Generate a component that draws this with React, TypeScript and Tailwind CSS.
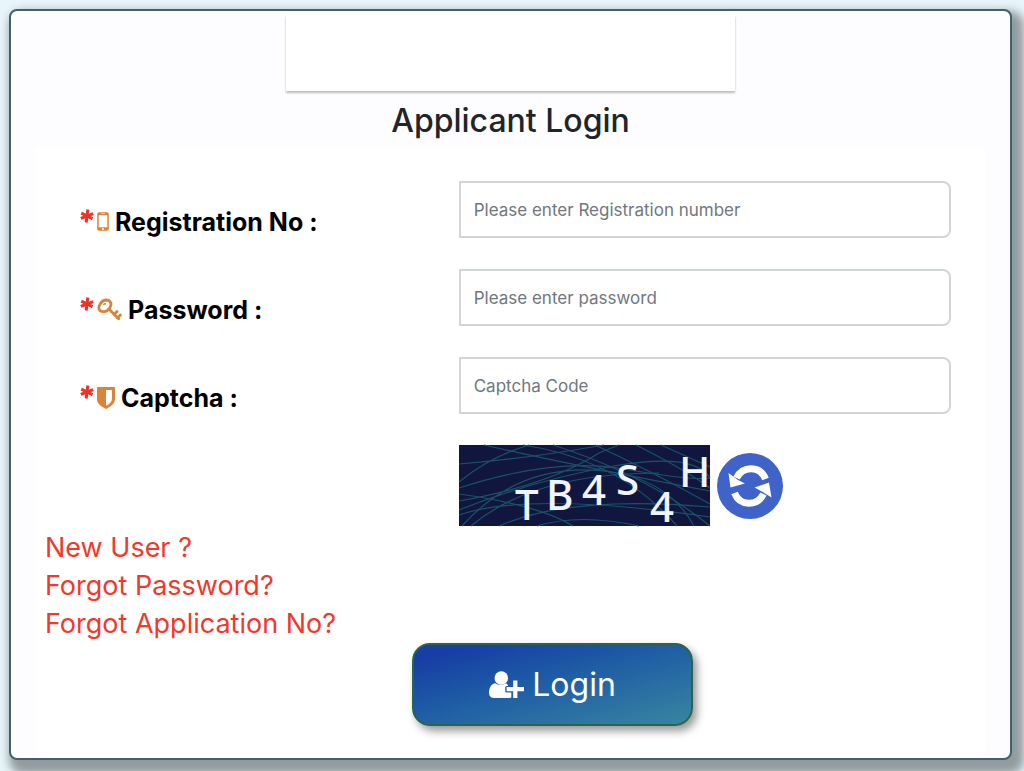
import { type ReactNode } from 'react'

interface FieldProps {
  id: string
  label: string
  type?: string
  placeholder: string
  icon: ReactNode
}

function Asterisk() {
  return (
    <svg viewBox="0 0 14 14" className="mb-3 h-[14px] w-[14px] text-[#ee3124]" aria-hidden="true">
      <path
        d="M7.8.5 6.200 13.500M1.200 4.200l11.400 5.400M13.200 4.600.8 9.400"
        stroke="currentColor"
        strokeWidth="3"
        fill="none"
      />
    </svg>
  )
}

function PhoneIcon() {
  return (
    <svg viewBox="0 0 12 19" className="h-[19px] w-3" aria-hidden="true">
      <path
        fill="currentColor"
        fillRule="evenodd"
        d="M2 .2h8A1.8 1.8 0 0 1 11.8 2v15a1.8 1.8 0 0 1-1.8 1.8H2A1.8 1.8 0 0 1 .2 17V2A1.8 1.8 0 0 1 2 .2Zm-.3 3v12h8.6v-12Zm2.5-1.800v.6h3.600v-.6ZM6 16a1 1 0 1 0 0 2 1 1 0 0 0 0-2Z"
      />
    </svg>
  )
}

function KeyIcon() {
  return (
    <svg viewBox="0 0 25 24" className="h-6 w-[25px]" aria-hidden="true">
      <g fill="none" stroke="currentColor" strokeWidth="2.800" strokeLinejoin="round">
        <path d="M2.800 6.700C4.200 3.900 6.900 2 9.600 2c2.900.1 4.600 2.200 4.300 4.800-.4 3.400-3.500 6.700-7 6.900-3 .2-5.300-1.600-5.100-4.200.1-1 .4-1.900 1-2.800Z" />
        <path d="M11.800 11l9.900 9.800M17 16.600l3-3M20.400 20l3-3" strokeLinecap="round" />
        <path d="M6.400 6.700c.8-.9 1.700-1.200 2.600-1" strokeWidth="1.500" />
      </g>
    </svg>
  )
}

function ShieldIcon() {
  return (
    <svg viewBox="0 0 18 22" className="h-[22px] w-[18px]" aria-hidden="true">
      <path
        fill="currentColor"
        fillRule="evenodd"
        d="M1 0h16q1 0 1 1v11c0 4.500-4 7.700-9 10-5-2.300-9-5.500-9-10V1Q0 0 1 0Zm8 3v15.800c3.600-1.900 6-4.100 6-6.900V3Z"
      />
    </svg>
  )
}

function UserPlusIcon() {
  return (
    <svg viewBox="0 0 35 27" className="h-[27px] w-[35px]" aria-hidden="true">
      <g fill="currentColor">
        <circle cx="12.300" cy="7" r="6.800" />
        <path d="M6.500 12.300c-4.500.4-6.500 5-6.500 9.800C0 25 1.700 27 4.600 27h15.800q1 0 1.900-.4v-5.100h-4.600q-1.500 0-1.500-1.500v-3.400q0-1.500 1.500-1.500h1.500c-.5-1.600-1.400-2.600-2.600-2.800-2.700 2-7.300 2.100-10.100 0Z" />
        <path d="M24.200 9.500h4.200v6.600H35v4.100h-6.600v6.700h-4.200v-6.700h-6.600v-4.100h6.600Z" />
      </g>
    </svg>
  )
}

function RefreshIcon() {
  return (
    <svg viewBox="0 0 66 66" className="h-[66px] w-[66px]" aria-hidden="true">
      <circle cx="33" cy="33" r="33" fill="#4063c9" />
      <path
        d="M19.500 25C26 12.500 43 12.500 48.500 26M46.500 41C40 53.500 23 53.500 17.500 40"
        fill="none"
        stroke="#fff"
        strokeWidth="7"
      />
      <path fill="#fff" d="m11.500 20 2 14.500L28 30.500l-7-3.500ZM54.500 44.500l-2.500-15-14.500 5 6.500 3.500Z" />
    </svg>
  )
}

const letters = [
  { char: 'T', x: 56, y: 75 },
  { char: 'B', x: 87, y: 65 },
  { char: '4', x: 123, y: 60 },
  { char: 'S', x: 157, y: 50 },
  { char: '4', x: 191, y: 77 },
  { char: 'H', x: 220, y: 42 },
]

function CaptchaImage() {
  return (
    <svg viewBox="0 0 251 81" className="h-[81px] w-[251px] overflow-visible" role="img" aria-label="Captcha">
      <rect width="251" height="81" fill="#11163f" />
      <g fill="none" stroke="#1a526a" strokeWidth="1.200">
        <path d="M0 37Q30 12 70 0M0 19Q65 14 145 0M0 43Q95 12 165 24T251 33" />
        <path d="M0 56Q90 40 140 8L160 0M0 65Q75 35 155 21T251 33M3 81Q55 23 130 25T235 81" />
        <path d="M12 81Q75 28 200 28M0 70Q70 46 251 72M40 81Q110 50 251 62M78 81Q120 68 180 81" />
        <path d="M64 0Q160 14 218 81M94 0Q188 30 251 81M136 0Q192 26 251 59M177 0Q225 24 251 43" />
        <path d="M0 49Q80 60 114 81M25 0Q122 22 251 46M202 0 251 22" />
      </g>
      {letters.map((l, i) => (
        <text key={i} x={l.x} y={l.y} fill="#f0f4ff" fontSize="42" fontWeight="500" fontFamily="'Noto Sans', sans-serif">
          {l.char}
        </text>
      ))}
    </svg>
  )
}

function Field({ id, label, type = 'text', placeholder, icon }: FieldProps) {
  return (
    <div className="grid grid-cols-[10fr_13fr] items-center">
      <label htmlFor={id} className="flex items-center pt-6 text-[25px] leading-8 font-bold text-black">
        <Asterisk />
        <span className="mr-[6px] ml-[3px] text-[#d8843b]">{icon}</span>
        {label}
      </label>
      <input
        id={id}
        type={type}
        placeholder={placeholder}
        className="h-[57px] w-full min-w-0 rounded-lg rounded-l-none border-2 border-[#d0d5da] bg-white px-[13px] text-[17px] text-gray-700 placeholder:text-[#70777e]"
      />
    </div>
  )
}

export default function App() {
  return (
    <div className="min-h-screen bg-[#e8f6fb] pt-[9px] pr-3 pb-3 pl-[9px] font-['Inter',sans-serif]">
      <main className="rounded-lg border-2 border-[#41616f] bg-[#fdfdff] px-[25px] pt-1 shadow-[6px_8px_10px_6px_#929b9d]">
        <div className="mx-auto h-[76px] w-[449px] max-w-full bg-white shadow-[0_2px_2px_#bbb]" />
        <h1 className="pt-[10px] pb-[6px] text-center text-[32px] leading-10 font-medium text-[#212529]">Applicant Login</h1>

        <form className="bg-white px-[9px] pt-[34px] pb-8" onSubmit={(e) => e.preventDefault()}>
          <div className="flex flex-col gap-[31px] pr-[25px] pl-[35px]">
            <Field id="registration" label="Registration No :" placeholder="Please enter Registration number" icon={<PhoneIcon />} />
            <Field id="password" label="Password :" type="password" placeholder="Please enter password" icon={<KeyIcon />} />
            <Field id="captcha" label="Captcha :" placeholder="Captcha Code" icon={<ShieldIcon />} />
            <div className="grid grid-cols-[10fr_13fr]">
              <div className="col-start-2 flex items-center gap-[7px]">
                <CaptchaImage />
                <button type="button" aria-label="Refresh captcha" className="rounded-full">
                  <RefreshIcon />
                </button>
              </div>
            </div>
          </div>

          <nav className="flex flex-col items-start pt-[3px] text-[27px] leading-[38px] text-[#f0392b]">
            <a href="#new-user">New User ?</a>
            <a href="#forgot-password">Forgot Password?</a>
            <a href="#forgot-application">Forgot Application No?</a>
          </nav>

          <div className="flex justify-center pl-[84px]">
            <button
              type="submit"
              className="flex h-[83px] w-[281px] items-center justify-center gap-2 rounded-[18px] border-2 border-[#28654b] bg-linear-165 from-[#183da5] from-10% to-[#3985a0] text-[32px] text-white shadow-[4px_5px_8px_#999]"
            >
              <UserPlusIcon />
              Login
            </button>
          </div>
        </form>
      </main>
    </div>
  )
}
